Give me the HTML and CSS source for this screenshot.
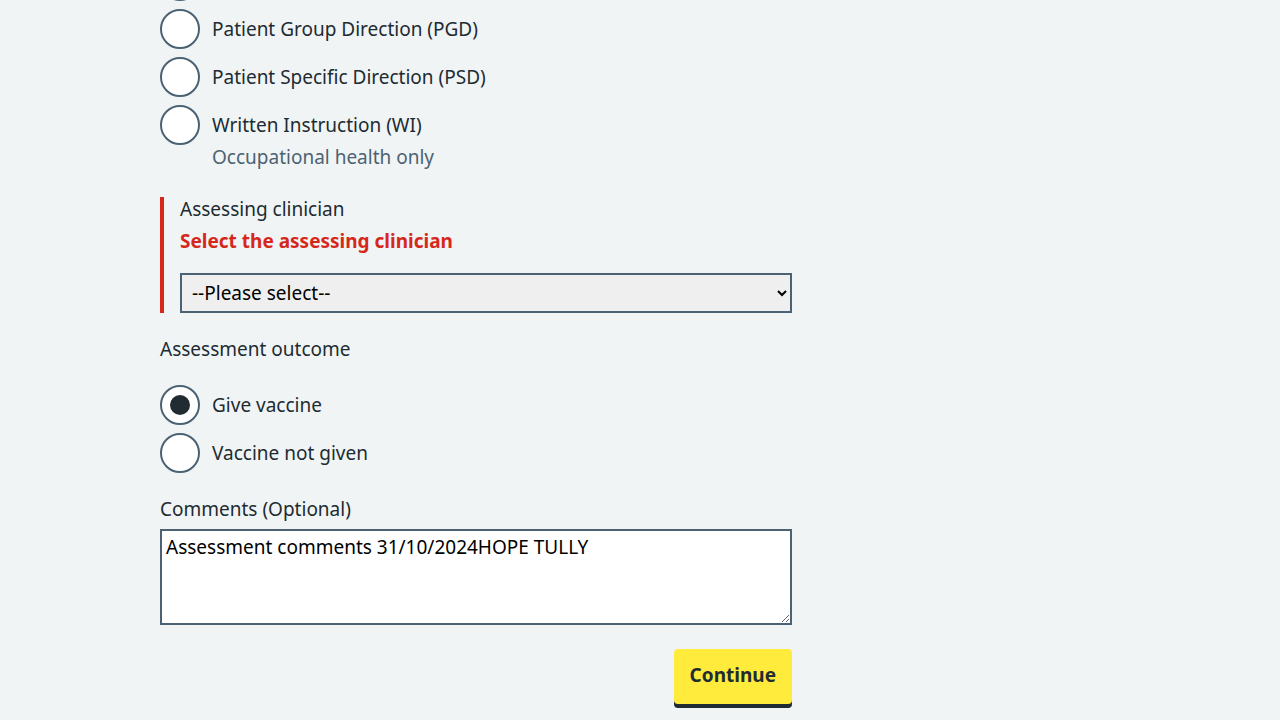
FILE: index.html
```html
<!DOCTYPE html>
<html lang="en">
<head>
<meta charset="utf-8">
<title>Assessment</title>
<link rel="stylesheet" href="styles.css">
</head>
<body>
<main class="container">
  <div class="radios radios-first">
    <div class="radio-item">
      <span class="radio"></span>
    </div>
    <div class="radio-item">
      <span class="radio"></span>
      <span class="radio-label">Patient Group Direction (PGD)</span>
    </div>
    <div class="radio-item">
      <span class="radio"></span>
      <span class="radio-label">Patient Specific Direction (PSD)</span>
    </div>
    <div class="radio-item">
      <span class="radio"></span>
      <div class="radio-text">
        <span class="radio-label">Written Instruction (WI)</span>
        <span class="hint">Occupational health only</span>
      </div>
    </div>
  </div>

  <div class="form-group error-group">
    <label class="label error-label">Assessing clinician</label>
    <span class="error-message">Select the assessing clinician</span>
    <select class="select">
      <option>--Please select--</option>
    </select>
  </div>

  <div class="form-group">
    <div class="label legend">Assessment outcome</div>
    <div class="radios">
      <div class="radio-item">
        <span class="radio checked"></span>
        <span class="radio-label">Give vaccine</span>
      </div>
      <div class="radio-item">
        <span class="radio"></span>
        <span class="radio-label">Vaccine not given</span>
      </div>
    </div>
  </div>

  <div class="form-group">
    <label class="label comments-label">Comments (Optional)</label>
    <textarea class="textarea" rows="3">Assessment comments 31/10/2024HOPE TULLY</textarea>
  </div>

  <div class="actions">
    <button class="button">Continue</button>
  </div>
</main>
</body>
</html>
```
FILE: styles.css
```css
html, body {
  margin: 0;
  padding: 0;
  background: #f0f4f5;
  color: #212b32;
  font-family: "Noto Sans", "Open Sans", sans-serif;
  font-size: 19px;
  line-height: 28px;
}

.container {
  width: 632px;
  margin-left: 160px;
  padding-bottom: 40px;
}

.radios {
  display: flex;
  flex-direction: column;
  gap: 8px;
}

.radios-first {
  margin-top: -39px;
}

.radio-item {
  display: flex;
  align-items: flex-start;
  gap: 12px;
}

.radio {
  flex: none;
  width: 40px;
  height: 40px;
  box-sizing: border-box;
  border: 2px solid #4c6272;
  border-radius: 50%;
  background: #fff;
  display: flex;
  align-items: center;
  justify-content: center;
}

.radio.checked::after {
  content: "";
  width: 20px;
  height: 20px;
  border-radius: 50%;
  background: #212b32;
}

.radio-label {
  display: block;
  padding-top: 6px;
}

.radio-text {
  display: flex;
  flex-direction: column;
}

.hint {
  color: #4c6272;
  margin-top: 4px;
}

.form-group {
  display: flex;
  flex-direction: column;
}

.error-group {
  margin-top: 26px;
  border-left: 4px solid #d5281b;
  padding-left: 16px;
}

.label {
  display: block;
  margin-bottom: 4px;
}

.error-label {
  line-height: 24px;
  margin-bottom: 6px;
}

.error-message {
  color: #d5281b;
  font-weight: 700;
  margin-bottom: 18px;
}

.select {
  height: 40px;
  box-sizing: border-box;
  border: 2px solid #4c6272;
  border-radius: 0;
  background: #efefef;
  color: #000;
  font-family: inherit;
  font-size: 19px;
  padding: 0 6px;
  width: 612px;
}

.form-group + .form-group {
  margin-top: 22px;
}

.legend {
  margin-bottom: 22px;
}

.comments-label {
  margin-bottom: 6px;
}

.textarea {
  box-sizing: border-box;
  width: 632px;
  height: 96px;
  border: 2px solid #4c6272;
  border-radius: 0;
  background: #fff;
  color: #000;
  font-family: inherit;
  font-size: 19px;
  line-height: 24px;
  padding: 4px 4px;
  margin: 0;
}

.actions {
  display: flex;
  justify-content: flex-end;
  margin-top: 24px;
}

.button {
  background: #ffeb3b;
  color: #212b32;
  border: 0;
  border-radius: 4px;
  box-shadow: 0 4px 0 #212b32;
  font-family: inherit;
  font-size: 19px;
  font-weight: 700;
  line-height: 28px;
  padding: 12px 16px 15px;
}
```
